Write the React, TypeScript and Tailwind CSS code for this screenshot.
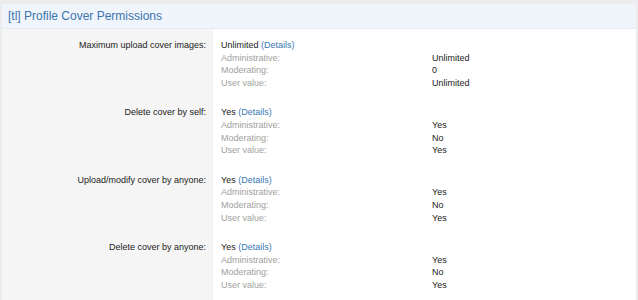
import React from 'react';

type Perm = {
  label: string;
  value: string;
  admin: string;
  mod: string;
  user: string;
};

const perms: Perm[] = [
  { label: 'Maximum upload cover images:', value: 'Unlimited', admin: 'Unlimited', mod: '0', user: 'Unlimited' },
  { label: 'Delete cover by self:', value: 'Yes', admin: 'Yes', mod: 'No', user: 'Yes' },
  { label: 'Upload/modify cover by anyone:', value: 'Yes', admin: 'Yes', mod: 'No', user: 'Yes' },
  { label: 'Delete cover by anyone:', value: 'Yes', admin: 'Yes', mod: 'No', user: 'Yes' },
];

const PermRow = ({ perm }: { perm: Perm }) => {
  const sub = [
    ['Administrative:', perm.admin],
    ['Moderating:', perm.mod],
    ['User value:', perm.user],
  ];
  return (
    <div className="flex h-[67.4px] shrink-0">
      <div className="w-[211px] shrink-0 bg-[#f5f5f5] pr-[7px] pt-[10px] text-right text-[#222]">
        {perm.label}
      </div>
      <div className="flex-1 pl-[8px] pt-[10px]">
        <div className="text-[#222]">
          {perm.value} <span className="text-[#3a78b5]">(Details)</span>
        </div>
        {sub.map(([k, v]) => (
          <div key={k} className="flex">
            <span className="w-[211px] text-[#a0a0a0]">{k}</span>
            <span className="text-[#222]">{v}</span>
          </div>
        ))}
      </div>
    </div>
  );
};

export default function App() {
  return (
    <div className="h-[300px] w-[638px] overflow-hidden bg-[#ececec] pt-[4px] font-['Liberation_Sans',Arial,sans-serif] text-[9px] leading-[12.6px]">
      <div className="ml-[2px] mr-[2px] flex h-full flex-col bg-white">
        {/* Header */}
        <div className="flex h-[25px] shrink-0 items-center border-b border-[#e4ebf3] bg-[#f0f5fc] pl-[6px] text-[12px] text-[#3b74ad]">
          [tl] Profile Cover Permissions
        </div>

        {/* Rows */}
        <div className="flex flex-1 flex-col bg-[linear-gradient(to_right,#f5f5f5_211px,white_211px)]">
          {perms.map((p) => (
            <PermRow key={p.label} perm={p} />
          ))}
        </div>
      </div>
    </div>
  );
}
